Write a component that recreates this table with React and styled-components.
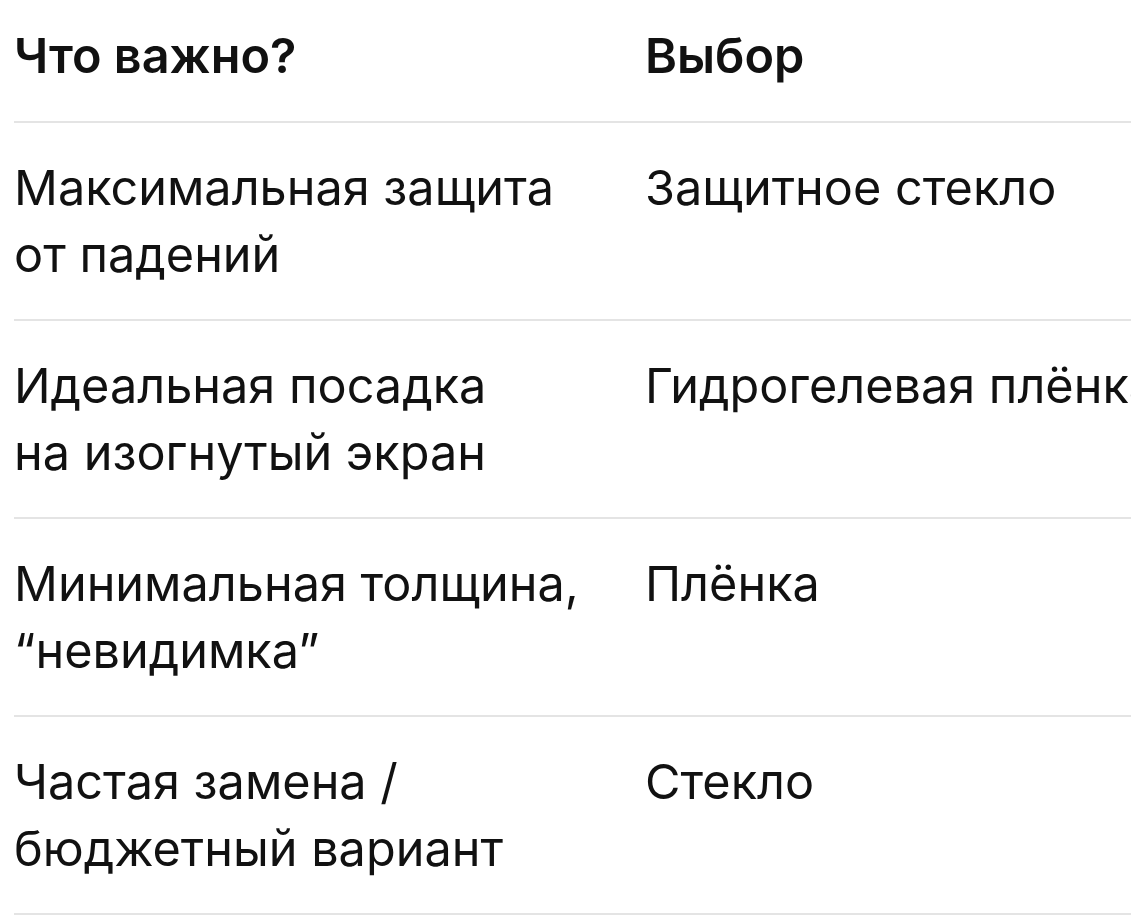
import React from "react";
import styled, { createGlobalStyle } from "styled-components";

const Global = createGlobalStyle`
  html, body { margin: 0; padding: 0; background: #ffffff; }
  body { overflow: hidden; }
`;

const Page = styled.div`
  width: 1131px;
  height: 918px;
  overflow: hidden;
  padding-left: 14px;
  box-sizing: border-box;
  font-family: Inter, "Liberation Sans", Arial, sans-serif;
  color: #111111;
`;

const Table = styled.div`
  display: grid;
  grid-template-columns: 631px 700px;
  width: 1331px;
`;

const Cell = styled.div`
  font-size: 48.6px;
  line-height: 67px;
  font-weight: ${(p) => (p.$head ? 600 : 400)};
  padding: ${(p) => (p.$head ? "22px 0 32px" : "31px 0 31px")};
  border-bottom: 2px solid #e4e4e4;
  white-space: nowrap;
`;

const rows = [
  [["Максимальная защита", "от падений"], "Защитное стекло"],
  [["Идеальная посадка", "на изогнутый экран"], "Гидрогелевая плёнка"],
  [["Минимальная толщина,", "“невидимка”"], "Плёнка"],
  [["Частая замена /", "бюджетный вариант"], "Стекло"],
];

export default function App() {
  return (
    <>
      <Global />
      <Page>
        <Table>
          <Cell $head>Что важно?</Cell>
          <Cell $head>Выбор</Cell>
          {rows.map(([lines, choice], i) => (
            <React.Fragment key={i}>
              <Cell>
                {lines[0]}
                <br />
                {lines[1]}
              </Cell>
              <Cell>{choice}</Cell>
            </React.Fragment>
          ))}
        </Table>
      </Page>
    </>
  );
}
